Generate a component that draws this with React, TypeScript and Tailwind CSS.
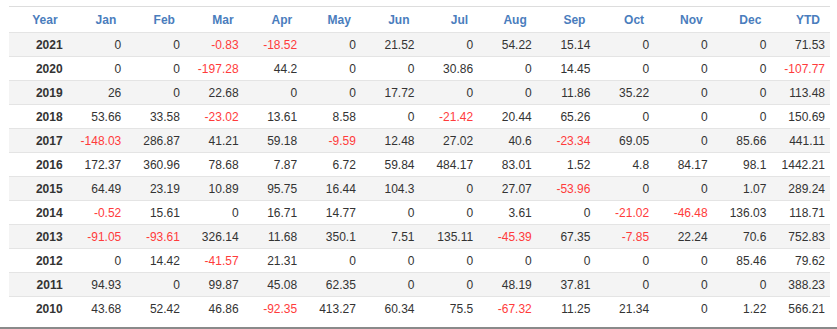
import React from "react";

const headers = ["Year", "Jan", "Feb", "Mar", "Apr", "May", "Jun", "Jul", "Aug", "Sep", "Oct", "Nov", "Dec", "YTD"];

const rows: string[][] = [
  ["2021", "0", "0", "-0.83", "-18.52", "0", "21.52", "0", "54.22", "15.14", "0", "0", "0", "71.53"],
  ["2020", "0", "0", "-197.28", "44.2", "0", "0", "30.86", "0", "14.45", "0", "0", "0", "-107.77"],
  ["2019", "26", "0", "22.68", "0", "0", "17.72", "0", "0", "11.86", "35.22", "0", "0", "113.48"],
  ["2018", "53.66", "33.58", "-23.02", "13.61", "8.58", "0", "-21.42", "20.44", "65.26", "0", "0", "0", "150.69"],
  ["2017", "-148.03", "286.87", "41.21", "59.18", "-9.59", "12.48", "27.02", "40.6", "-23.34", "69.05", "0", "85.66", "441.11"],
  ["2016", "172.37", "360.96", "78.68", "7.87", "6.72", "59.84", "484.17", "83.01", "1.52", "4.8", "84.17", "98.1", "1442.21"],
  ["2015", "64.49", "23.19", "10.89", "95.75", "16.44", "104.3", "0", "27.07", "-53.96", "0", "0", "1.07", "289.24"],
  ["2014", "-0.52", "15.61", "0", "16.71", "14.77", "0", "0", "3.61", "0", "-21.02", "-46.48", "136.03", "118.71"],
  ["2013", "-91.05", "-93.61", "326.14", "11.68", "350.1", "7.51", "135.11", "-45.39", "67.35", "-7.85", "22.24", "70.6", "752.83"],
  ["2012", "0", "14.42", "-41.57", "21.31", "0", "0", "0", "0", "0", "0", "0", "85.46", "79.62"],
  ["2011", "94.93", "0", "99.87", "45.08", "62.35", "0", "0", "48.19", "37.81", "0", "0", "0", "388.23"],
  ["2010", "43.68", "52.42", "46.86", "-92.35", "413.27", "60.34", "75.5", "-67.32", "11.25", "21.34", "0", "1.22", "566.21"],
];

export default function App() {
  return (
    <div
      className="w-[837px] h-[329px] bg-white border-b-2 border-[#8a8a8a] pt-[6px] pl-[9px] text-[12px] leading-none"
      style={{ fontFamily: '"Liberation Sans", Arial, sans-serif' }}
    >
      <div className="w-[821px] border-t border-[#dddddd]">
        <div className="grid grid-cols-[repeat(14,minmax(0,1fr))] h-[25px] items-center">
          {headers.map((h) => (
            <div key={h} className="text-right pr-[10px] font-bold text-[#4a7dbd]">
              {h}
            </div>
          ))}
        </div>
        {rows.map((r, i) => (
          <div
            key={r[0]}
            className={
              "grid grid-cols-[repeat(14,minmax(0,1fr))] h-[24px] items-center border-t border-[#e4e4e4] " +
              (i % 2 === 0 ? "bg-[#f4f4f4]" : "bg-white")
            }
          >
            {r.map((v, j) => (
              <div
                key={j}
                className={
                  "text-right pr-[5px] " +
                  (j === 0
                    ? "font-bold text-[#333333]"
                    : v.startsWith("-")
                    ? "text-[#ff3b3b]"
                    : "text-[#333333]")
                }
              >
                {v}
              </div>
            ))}
          </div>
        ))}
      </div>
    </div>
  );
}
